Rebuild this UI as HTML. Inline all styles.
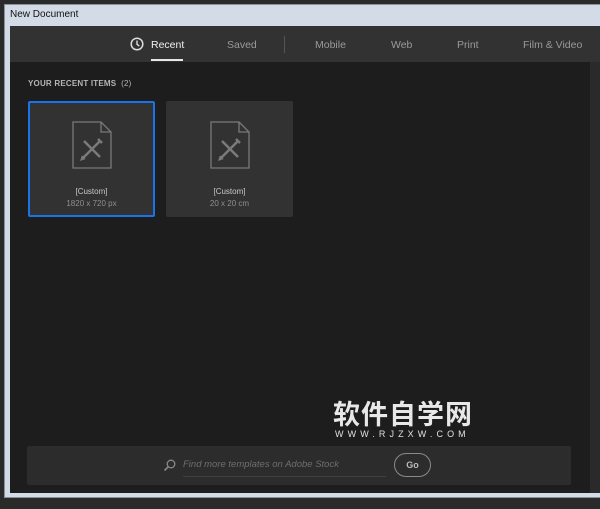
<!DOCTYPE html>
<html><head><style>
body{margin:0;width:600px;height:509px;background:#2a2a2a;position:relative;overflow:hidden;font-family:"Liberation Sans",sans-serif}
.frame{position:absolute;left:4px;top:4px;width:600px;height:494px;background:#d3dce6;border:1px solid #8a9199;box-sizing:border-box}
.title{position:absolute;left:10px;top:9px;font-size:10px;color:#111}
.content{position:absolute;left:10px;top:26px;width:590px;height:467px;background:#1d1d1d}
.hdr{position:absolute;left:0;top:0;width:590px;height:36px;background:#323232}
.tab{position:absolute;top:13px;font-size:10.5px;color:#9a9a9a}
.sec{position:absolute;left:18px;top:53px;font-size:8px;font-weight:bold;color:#b5b5b5;letter-spacing:.2px}
.card{position:absolute;top:75px;width:127px;height:116px;background:#323232;box-sizing:border-box;border-radius:2px}
.card .n{position:absolute;width:100%;text-align:center;top:86px;font-size:8px;color:#c8c8c8}
.card .s{position:absolute;width:100%;text-align:center;top:98px;font-size:8px;color:#8f8f8f}
.card svg{position:absolute;left:43px;top:19px}
</style></head><body>
<div class="frame"></div>
<div class="title">New Document</div>
<div class="content">
<div class="hdr">
<svg style="position:absolute;left:120px;top:11px" width="14" height="14" viewBox="0 0 14 14"><circle cx="7" cy="7" r="5.8" fill="none" stroke="#ddd" stroke-width="1.5"/><path d="M7 3.5V7.3L9.3 9" fill="none" stroke="#ddd" stroke-width="1.4"/></svg>
<div class="tab" style="left:141px;color:#f0f0f0">Recent</div>
<div style="position:absolute;left:141px;top:33px;width:32px;height:2px;background:#e6e6e6"></div>
<div class="tab" style="left:217px">Saved</div>
<div style="position:absolute;left:274px;top:10px;width:1px;height:17px;background:#555"></div>
<div class="tab" style="left:305px">Mobile</div>
<div class="tab" style="left:381px">Web</div>
<div class="tab" style="left:447px">Print</div>
<div class="tab" style="left:513px">Film &amp; Video</div>
</div>
<div style="position:absolute;left:580px;top:36px;width:10px;height:431px;background:#2a2a2a"></div>
<div class="sec">YOUR RECENT ITEMS &nbsp;<span style="font-weight:normal">(2)</span></div>
<div class="card" style="left:18px;border:2px solid #1a73e8"><svg style="left:41px;top:17px" width="42" height="50" viewBox="0 0 42 50"><path d="M2 2H30L40 12V48H2Z M30 2V12H40" fill="none" stroke="#7a7a7a" stroke-width="1.3"/><path d="M13 21L29 37M29 21L13 37M12 36l-1 3 3-1M27 19l4 4" fill="none" stroke="#7a7a7a" stroke-width="2.5"/></svg><div class="n" style="top:84px">[Custom]</div><div class="s" style="top:96px">1820 x 720 px</div></div>
<div class="card" style="left:156px"><svg width="42" height="50" viewBox="0 0 42 50"><path d="M2 2H30L40 12V48H2Z M30 2V12H40" fill="none" stroke="#7a7a7a" stroke-width="1.3"/><path d="M13 21L29 37M29 21L13 37M12 36l-1 3 3-1M27 19l4 4" fill="none" stroke="#7a7a7a" stroke-width="2.5"/></svg><div class="n">[Custom]</div><div class="s">20 x 20 cm</div></div>
<div style="position:absolute;left:323px;top:372px;font-family:'Noto Sans CJK SC',sans-serif;font-size:27px;font-weight:bold;color:#e8e8e8;line-height:30px;letter-spacing:1px">软件自学网</div>
<div style="position:absolute;left:325px;top:403px;font-size:9px;color:#e0e0e0;letter-spacing:4.1px">WWW.RJZXW.COM</div>
<div style="position:absolute;left:17px;top:420px;width:544px;height:39px;background:#2c2c2c;border-radius:2px">
<svg style="position:absolute;left:136px;top:13px" width="13" height="13" viewBox="0 0 13 13"><circle cx="8" cy="5" r="3.8" fill="none" stroke="#888" stroke-width="1.3"/><path d="M5.3 7.7L1.5 11.5" stroke="#888" stroke-width="1.6"/></svg>
<div style="position:absolute;left:156px;top:13px;font-size:9.5px;font-style:italic;color:#6e6e6e">Find more templates on Adobe Stock</div>
<div style="position:absolute;left:156px;top:30px;width:203px;height:1px;background:#404040"></div>
<div style="position:absolute;left:367px;top:7px;width:35px;height:22px;border:1.5px solid #8a8a8a;border-radius:12px;color:#bbb;font-size:9px;font-weight:bold;text-align:center;line-height:22px">Go</div>
</div>
</div>
</body></html>
